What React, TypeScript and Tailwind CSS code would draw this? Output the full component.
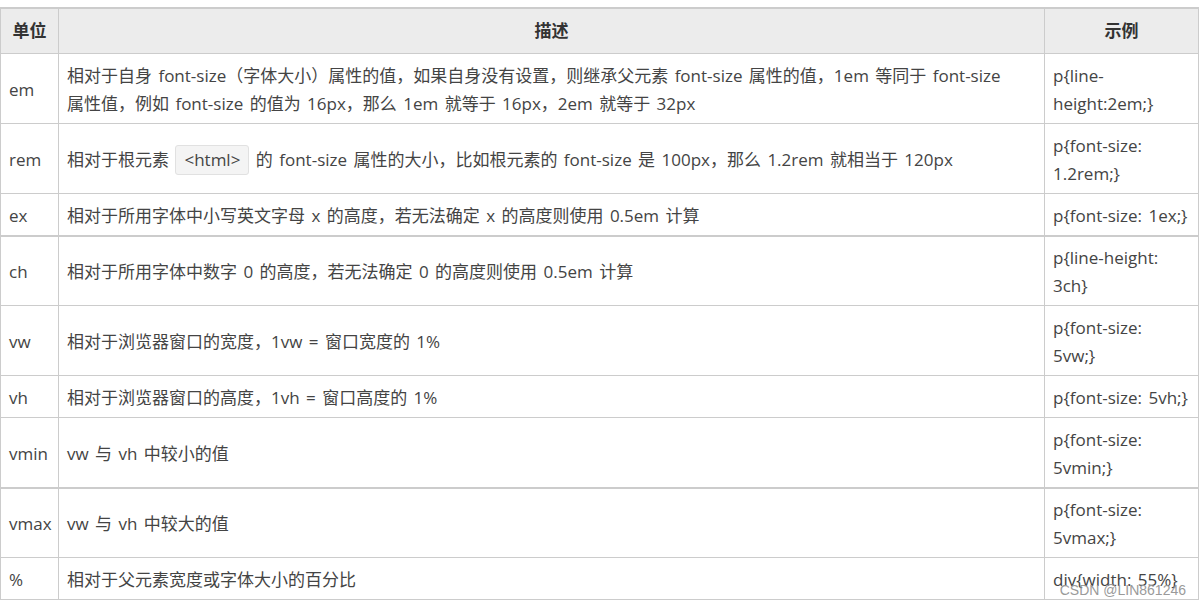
import React from 'react';

type Row = {
  unit: string;
  desc: React.ReactNode;
  example: string[];
  thick?: boolean;
};

const rows: Row[] = [
  {
    unit: 'em',
    desc: (
      <>
        相对于自身 font-size（字体大小）属性的值，如果自身没有设置，则继承父元素 font-size 属性的值，1em 等同于 font-size
        <br />
        属性值，例如 font-size 的值为 16px，那么 1em 就等于 16px，2em 就等于 32px
      </>
    ),
    example: ['p{line-', 'height:2em;}'],
  },
  {
    unit: 'rem',
    desc: (
      <>
        相对于根元素{' '}
        <code className="-my-px inline-block rounded-[3px] border border-[#e1e1e1] bg-[#f4f4f4] px-[8px] align-top leading-[28px] text-[#444] [font-family:inherit] [word-spacing:0]">
          &lt;html&gt;
        </code>{' '}
        的 font-size 属性的大小，比如根元素的 font-size 是 100px，那么 1.2rem 就相当于 120px
      </>
    ),
    example: ['p{font-size:', '1.2rem;}'],
  },
  {
    unit: 'ex',
    desc: '相对于所用字体中小写英文字母 x 的高度，若无法确定 x 的高度则使用 0.5em 计算',
    example: ['p{font-size: 1ex;}'],
  },
  {
    unit: 'ch',
    desc: '相对于所用字体中数字 0 的高度，若无法确定 0 的高度则使用 0.5em 计算',
    example: ['p{line-height:', '3ch}'],
    thick: true,
  },
  {
    unit: 'vw',
    desc: '相对于浏览器窗口的宽度，1vw = 窗口宽度的 1%',
    example: ['p{font-size:', '5vw;}'],
  },
  {
    unit: 'vh',
    desc: '相对于浏览器窗口的高度，1vh = 窗口高度的 1%',
    example: ['p{font-size: 5vh;}'],
  },
  {
    unit: 'vmin',
    desc: 'vw 与 vh 中较小的值',
    example: ['p{font-size:', '5vmin;}'],
  },
  {
    unit: 'vmax',
    desc: 'vw 与 vh 中较大的值',
    example: ['p{font-size:', '5vmax;}'],
    thick: true,
  },
  {
    unit: '%',
    desc: '相对于父元素宽度或字体大小的百分比',
    example: ['div{width: 55%}'],
  },
];

const cell = 'border border-[#cccccc] px-2 pb-[5px] align-middle';

const App = () => {
  return (
    <div className="relative h-[607px] w-[1202px] overflow-hidden bg-white pt-[7px] text-[17px] leading-[28px] text-[#444] [font-family:'Open_Sans','Noto_Sans_CJK_SC',sans-serif] [word-spacing:2px]">
      <table className="w-[1198px] table-fixed border-collapse border-t-2 border-[#cccccc]">
        <colgroup>
          <col className="w-[58px]" />
          <col className="w-[986px]" />
          <col className="w-[154px]" />
        </colgroup>
        <thead>
          <tr className="bg-[#ececec] font-bold text-[#333]">
            <th className="border border-[#cccccc] px-2 pt-[8px] pb-[8px] text-center">单位</th>
            <th className="border border-[#cccccc] px-2 pt-[8px] pb-[8px] text-center">描述</th>
            <th className="border border-[#cccccc] px-2 pt-[8px] pb-[8px] text-center">示例</th>
          </tr>
        </thead>
        <tbody>
          {rows.map((row) => {
            const pad = row.thick ? `${cell} pt-[7px]` : `${cell} pt-[8px]`;
            return (
              <tr key={row.unit} className={row.thick ? 'border-t-2 border-[#cccccc]' : ''}>
                <td className={pad}>{row.unit}</td>
                <td className={pad}>{row.desc}</td>
                <td className={pad}>
                  {row.example.map((line) => (
                    <div key={line} className="whitespace-nowrap">
                      {line}
                    </div>
                  ))}
                </td>
              </tr>
            );
          })}
        </tbody>
      </table>
      <div className="absolute right-[16px] top-[581px] text-[14px] leading-[18px] text-[#9a9a9a] [font-family:'Liberation_Sans',Arial,sans-serif] [word-spacing:0]">
        CSDN @LIN861246
      </div>
    </div>
  );
};

export default App;
